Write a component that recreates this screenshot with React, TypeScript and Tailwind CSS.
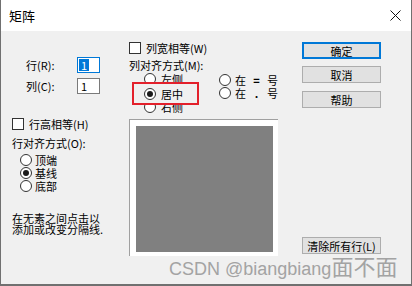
import React from "react";

function Radio({ checked }: { checked?: boolean }) {
  return (
    <span className="w-[12px] h-[12px] rounded-full border border-[#333333] bg-white flex items-center justify-center shrink-0">
      {checked && <span className="w-[6px] h-[6px] rounded-full bg-[#1a1a1a]" />}
    </span>
  );
}

function Check() {
  return <span className="w-[12px] h-[12px] border border-[#333333] bg-white shrink-0" />;
}

function Btn({ children, primary }: { children: React.ReactNode; primary?: boolean }) {
  return (
    <div
      className={
        "w-[79px] h-[17px] bg-[#e1e1e1] flex items-center justify-center " +
        (primary ? "border-2 border-[#0078d7]" : "border border-[#adadad]")
      }
    >
      {children}
    </div>
  );
}

export default function App() {
  return (
    <div className="w-[412px] h-[286px] relative flex flex-col bg-[#f0f0f0] border-l border-r border-b-2 border-[#707070] overflow-hidden text-black text-[11px] leading-[12px] font-['Noto_Sans_CJK_SC','Noto_Sans',sans-serif]">
      {/* title bar */}
      <div className="h-[31px] shrink-0 bg-white flex items-center justify-between pl-[8px] pr-[10px]">
        <span className="text-[13px] leading-[16px]">矩阵</span>
        <svg width="11" height="11" viewBox="0 0 11 11">
          <path d="M0.5 0.5 L10.5 10.5 M10.5 0.5 L0.5 10.5" stroke="#111" strokeWidth="1" />
        </svg>
      </div>

      {/* body */}
      <div className="flex-1 flex pl-[11px] pt-[11px]">
        {/* left column */}
        <div className="w-[117px] flex flex-col">
          <div className="mt-[15px] flex items-center h-[16px]">
            <span className="ml-[14px] w-[51px] leading-[16px]">行(R):</span>
            <div className="w-[23px] h-[16px] border border-[#0078d7] bg-white flex items-center pl-[1px]">
              <span className="bg-[#0078d7] text-white h-[12px] px-[2px] leading-[12px]">1</span>
            </div>
          </div>
          <div className="mt-[5px] flex items-center h-[16px]">
            <span className="ml-[14px] w-[51px] leading-[16px]">列(C):</span>
            <div className="w-[23px] h-[16px] border border-[#7a7a7a] bg-white flex items-center pl-[3px]">
              <span className="leading-[12px]">1</span>
            </div>
          </div>
          <div className="mt-[24px] flex items-center gap-[5px] h-[12px]">
            <Check />
            <span>行高相等(H)</span>
          </div>
          <div className="mt-[7px] h-[12px]">行对齐方式(O):</div>
          <div className="mt-[4px] ml-[8px] flex flex-col">
            <div className="h-[13px] flex items-center gap-[3px]">
              <Radio />
              <span>顶端</span>
            </div>
            <div className="h-[13px] flex items-center gap-[3px]">
              <Radio checked />
              <span>基线</span>
            </div>
            <div className="h-[13px] flex items-center gap-[3px]">
              <Radio />
              <span>底部</span>
            </div>
          </div>
          <div className="mt-[21px] leading-[11px]">
            <div>在无素之间点击以</div>
            <div>添加或改变分隔线.</div>
          </div>
        </div>

        {/* middle column */}
        <div className="w-[173px] flex flex-col">
          <div className="flex items-center gap-[5px] h-[12px]">
            <Check />
            <span>列宽相等(W)</span>
          </div>
          <div className="mt-[5px] h-[12px]">列对齐方式(M):</div>
          <div className="mt-[1px] flex h-[42px]">
            <div className="ml-[15px] w-[75px] flex flex-col">
              <div className="h-[14px] flex items-center gap-[5px]">
                <Radio />
                <span>左侧</span>
              </div>
              <div className="h-[14px] relative z-10">
                <div className="absolute left-[-12px] top-[-4px] w-[67px] h-[23px] border-2 border-[#e3202b] bg-[#f0f0f0] flex items-center pl-[10px] gap-[5px]">
                  <Radio checked />
                  <span>居中</span>
                </div>
              </div>
              <div className="h-[14px] flex items-center gap-[5px]">
                <Radio />
                <span>右侧</span>
              </div>
            </div>
            <div className="mt-[1px] flex flex-col">
              <div className="h-[13px] flex items-center gap-[4px]">
                <Radio />
                <span>在</span>
                <span className="w-[13px] text-center font-bold">=</span>
                <span>号</span>
              </div>
              <div className="h-[13px] flex items-center gap-[4px]">
                <Radio />
                <span>在</span>
                <span className="w-[13px] text-center font-bold">.</span>
                <span>号</span>
              </div>
            </div>
          </div>
          <div className="mt-[5px] w-[149px] h-[137px] bg-white border-t border-l border-[#a0a0a0] pt-[6px] pl-[6px]">
            <div className="w-[137px] h-[126px] bg-[#808080]" />
          </div>
        </div>

        {/* right column */}
        <div className="w-[79px] flex flex-col">
          <Btn primary>确定</Btn>
          <div className="mt-[7px]">
            <Btn>取消</Btn>
          </div>
          <div className="mt-[8px]">
            <Btn>帮助</Btn>
          </div>
          <div className="mt-[129px]">
            <Btn>清除所有行(L)</Btn>
          </div>
        </div>
      </div>

      {/* watermark */}
      <div className="absolute left-[168px] top-[254px] flex items-baseline text-[#a3a3a3] pointer-events-none">
        <span className="text-[18px] leading-[22px] font-['Liberation_Sans',sans-serif]">CSDN @biangbiang</span>
        <span className="text-[22px] leading-[22px] font-['Noto_Sans_CJK_SC',sans-serif]">面不面</span>
      </div>
    </div>
  );
}
